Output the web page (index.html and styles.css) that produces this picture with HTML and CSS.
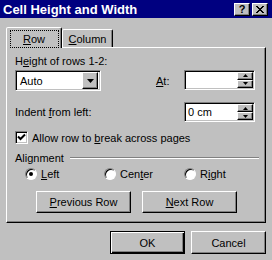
FILE: index.html
```html
<!DOCTYPE html>
<html>
<head>
<meta charset="utf-8">
<link rel="stylesheet" href="styles.css">
</head>
<body>
<div class="win">
  <div class="titlebar">
    <span class="title">Cell Height and Width</span>
    <div class="tbtns">
      <span class="tbtn q">?</span>
      <span class="tbtn"><svg width="8" height="7" viewBox="0 0 8 7"><path d="M0 0h2v1h1v1h2V1h1V0h2v1H7v1H6v1H5v1h1v1h1v1h1v1H6V6H5V5H3v1H2v1H0V6h1V5h1V4h1V3H2V2H1V1H0z" fill="#000"/></svg></span>
    </div>
  </div>
  <div class="client">
    <div class="tabs">
      <div class="tab sel"><span class="focus"><u>R</u>ow</span></div>
      <div class="tab"><u>C</u>olumn</div>
    </div>
    <div class="panel">
      <div class="label first">H<u>e</u>ight of rows 1-2:</div>
      <div class="row r2">
        <div class="combo">
          <span class="val">Auto</span>
          <span class="ddbtn"><svg width="7" height="4" viewBox="0 0 7 4"><path d="M0 0h7L3.5 4z" fill="#000"/></svg></span>
        </div>
        <span class="at"><u>A</u>t:</span>
        <div class="spin at-spin">
          <span class="val"></span>
          <span class="spbtns">
            <span class="spb"><svg width="5" height="3" viewBox="0 0 5 3"><path d="M2.5 0L5 3H0z" fill="#000"/></svg></span>
            <span class="spb"><svg width="5" height="3" viewBox="0 0 5 3"><path d="M0 0h5L2.5 3z" fill="#000"/></svg></span>
          </span>
        </div>
      </div>
      <div class="row r3">
        <span class="lbl">Indent <u>f</u>rom left:</span>
        <div class="spin">
          <span class="val">0 cm</span>
          <span class="spbtns">
            <span class="spb"><svg width="5" height="3" viewBox="0 0 5 3"><path d="M2.5 0L5 3H0z" fill="#000"/></svg></span>
            <span class="spb"><svg width="5" height="3" viewBox="0 0 5 3"><path d="M0 0h5L2.5 3z" fill="#000"/></svg></span>
          </span>
        </div>
      </div>
      <div class="row r4">
        <span class="check"><svg width="9" height="9" viewBox="0 0 9 9"><path d="M1 3.5l2.5 2.5L8 1.5" fill="none" stroke="#000" stroke-width="2"/></svg></span>
        <span class="lbl">Allow row to <u>b</u>reak across pages</span>
      </div>
      <div class="group">
        <span class="lbl">Alignment</span>
        <span class="etch"></span>
      </div>
      <div class="radios">
        <div class="ropt"><span class="radio on"></span><span><u>L</u>eft</span></div>
        <div class="ropt"><span class="radio"></span><span>Cen<u>t</u>er</span></div>
        <div class="ropt"><span class="radio"></span><span>R<u>i</u>ght</span></div>
      </div>
      <div class="pbtns">
        <span class="btn wide"><u>P</u>revious Row</span>
        <span class="btn wide"><u>N</u>ext Row</span>
      </div>
    </div>
    <div class="footer">
      <span class="btn def">OK</span>
      <span class="btn">Cancel</span>
    </div>
  </div>
</div>
</body>
</html>
```
FILE: styles.css
```css
* { box-sizing: border-box; }
html, body { margin: 0; padding: 0; }
body {
  width: 272px; height: 260px; overflow: hidden;
  background: #c0c0c0;
  font-family: "Liberation Sans", Arial, sans-serif;
  font-size: 11px; color: #000;
}
u { text-decoration: underline; text-underline-offset: 1px; }
.win { width: 272px; height: 260px; }
.titlebar {
  height: 18px; background: #000080; color: #fff;
  display: flex; align-items: center; justify-content: space-between;
  padding: 0 4px 0 3px;
}
.title { font-weight: bold; font-size: 13px; }
.tbtns { display: flex; gap: 2px; margin-top: 1px; }
.tbtn {
  width: 16px; height: 13px; background: #c0c0c0;
  border: 1px solid; border-color: #fff #000 #000 #fff;
  box-shadow: inset -1px -1px #808080;
  display: flex; align-items: center; justify-content: center;
  color: #000; font-weight: bold; font-size: 11px; line-height: 1;
}
.client { padding: 0 6px; }
.tabs {
  display: flex; align-items: flex-end; height: 21px; margin-top: 9px;
  position: relative; z-index: 1; margin-bottom: -1px;
}
.tab {
  height: 18px; width: 51px; margin-bottom: 1px;
  border: 1px solid; border-bottom: none;
  border-color: #fff #000 transparent #fff;
  border-radius: 2px 2px 0 0;
  box-shadow: inset -1px 0 #808080;
  background: #c0c0c0;
  display: flex; align-items: center; justify-content: center;
  padding-top: 1px;
}
.tab.sel {
  height: 21px; width: 56px; margin-bottom: 0;
  padding-top: 0; align-items: flex-start;
}
.focus {
  width: 47px; height: 16px; margin-top: 3px;
  outline: 1px dotted #000;
  display: flex; align-items: center; justify-content: center;
}
.panel {
  width: 260px; height: 176px;
  border: 1px solid; border-color: #fff #000 #000 #fff;
  box-shadow: inset -1px -1px #808080;
  padding: 0 10px 0 8px;
  display: flex; flex-direction: column;
}
.label { line-height: 13px; }
.label.first { margin-top: 7px; }
.row { display: flex; align-items: center; }
.r2 { margin-top: 2px; height: 21px; }
.combo {
  width: 86px; height: 21px; background: #fff;
  border: 1px solid; border-color: #808080 #fff #fff #808080;
  box-shadow: inset 1px 1px #000, inset -1px -1px #c0c0c0;
  display: flex; align-items: center; justify-content: space-between;
  padding: 2px 2px 2px 4px;
}
.ddbtn, .spb {
  background: #c0c0c0;
  border: 1px solid; border-color: #fff #000 #000 #fff;
  box-shadow: inset -1px -1px #808080;
  display: flex; align-items: center; justify-content: center;
}
.ddbtn { width: 16px; height: 17px; }
.at { margin-left: auto; width: 28px; }
.spin {
  width: 71px; height: 20px; background: #fff;
  border: 1px solid; border-color: #808080 #fff #fff #808080;
  box-shadow: inset 1px 1px #000, inset -1px -1px #c0c0c0;
  display: flex; align-items: center; justify-content: space-between;
  padding: 2px 1px 2px 3px;
}
.at-spin { margin-top: -2px; }
.spbtns { display: flex; flex-direction: column; }
.spb { width: 16px; height: 8px; }
.r3 { margin-top: 11px; height: 20px; justify-content: space-between; }
.r4 { margin-top: 9px; height: 13px; gap: 4px; }
.check {
  width: 13px; height: 13px; background: #fff;
  border: 1px solid; border-color: #808080 #fff #fff #808080;
  box-shadow: inset 1px 1px #000, inset -1px -1px #c0c0c0;
  display: flex; align-items: center; justify-content: center;
}
.group { display: flex; align-items: center; margin-top: 7px; height: 13px; gap: 6px; }
.etch { flex: 1; height: 2px; border-top: 1px solid #808080; border-bottom: 1px solid #fff; margin-right: -4px; }
.radios {
  display: grid; grid-template-columns: 79px 80px 60px;
  margin: 3px 0 0 10px; height: 13px;
}
.ropt { display: flex; align-items: center; gap: 4px; }
.radio {
  width: 12px; height: 12px; border-radius: 50%; background: #fff;
  border: 1px solid; border-color: #808080 #fff #fff #808080;
  box-shadow: inset 1px 1px #000;
  display: flex; align-items: center; justify-content: center;
}
.radio.on::after { content: ""; width: 4px; height: 4px; border-radius: 50%; background: #000; }
.pbtns { display: flex; gap: 11px; margin: 11px 0 0 21px; }
.btn {
  width: 75px; height: 23px; background: #c0c0c0;
  border: 1px solid; border-color: #fff #000 #000 #fff;
  box-shadow: inset -1px -1px #808080;
  display: flex; align-items: center; justify-content: center;
}
.btn.wide { width: 95px; height: 22px; }
.btn.def {
  border-color: #000;
  box-shadow: inset 1px 1px #fff, inset -1px -1px #000, inset -2px -2px #808080;
}
.footer { display: flex; justify-content: flex-end; gap: 6px; margin-top: 8px; }
```
